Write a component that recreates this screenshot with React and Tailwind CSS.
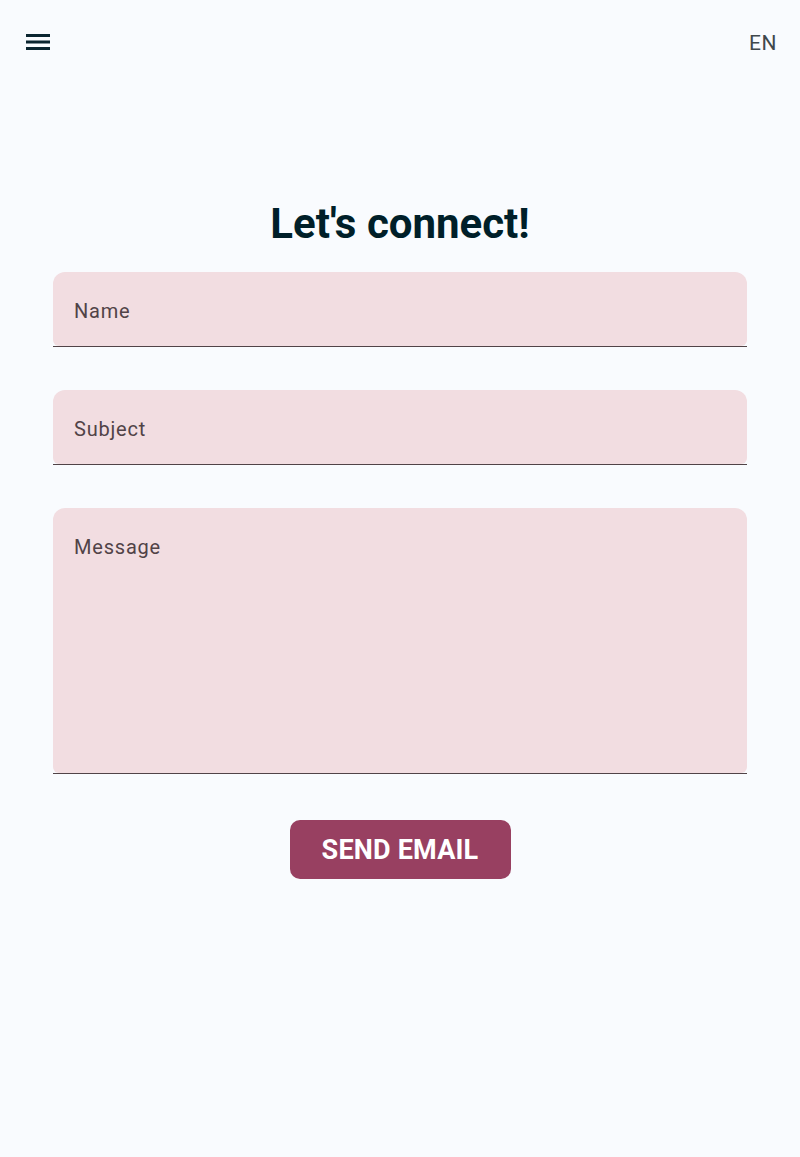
import React from 'react';

const fields = [
  { label: 'Name', height: 'h-[74px]' },
  { label: 'Subject', height: 'h-[74px]' },
  { label: 'Message', height: 'h-[265px]' },
];

const Field = ({ label, height }) => (
  <div className="border-b border-[#514347]">
    <div className={`${height} rounded-t-[12px] rounded-b-[6px] bg-[#f2dde1] px-[21px] pt-[25px]`}>
      <span className="text-[20px] leading-[28px] tracking-[0.8px] text-[#514347]">{label}</span>
    </div>
  </div>
);

export default function App() {
  return (
    <div className="min-h-[1157px] bg-[#f9fbfe] font-['Roboto',sans-serif]">
      {/* Top bar */}
      <div className="flex items-center justify-between h-[84px] pl-[26px] pr-[23px]">
        <button className="w-6 h-6 flex items-center justify-center">
          <svg width="24" height="24" viewBox="0 0 24 24">
            <path d="M0 4h24v3H0zM0 10.5h24v3H0zM0 17h24v3H0z" fill="#0b2530" />
          </svg>
        </button>
        <span className="text-[21px] leading-[28px] pt-[2px] tracking-[0.5px] text-[#40484c]">EN</span>
      </div>

      <div className="px-[53px] pt-[112px]">
        <h1 className="text-center text-[42px] leading-[56px] font-bold text-[#001f29]">Let's connect!</h1>

        <div className="mt-[20px] flex flex-col gap-[43px]">
          {fields.map((f) => (
            <Field key={f.label} {...f} />
          ))}
        </div>

        <div className="mt-[46px] flex justify-center">
          <button className="w-[221px] h-[59px] rounded-[10px] bg-[#984061] pt-[2px] text-white text-[27px] font-bold tracking-[0.2px]">
            SEND EMAIL
          </button>
        </div>
      </div>
    </div>
  );
}
